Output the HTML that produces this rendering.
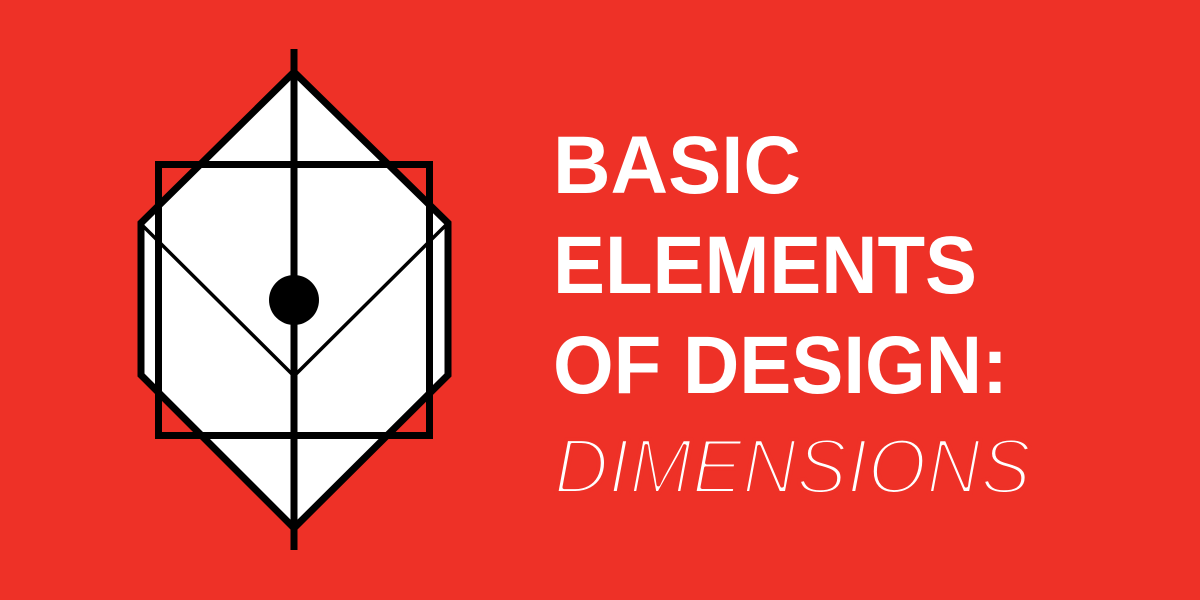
<!DOCTYPE html>
<html><head><meta charset="utf-8"><style>
html,body{margin:0;padding:0;background:#ee3127;}
svg{display:block}
</style></head><body>
<svg width="1200" height="600" viewBox="0 0 1200 600" xmlns="http://www.w3.org/2000/svg">
<rect width="1200" height="600" fill="#ee3127"/>
<polygon points="294,72 448,223 448,375 294,528 141,375 141,223" fill="#fff" stroke="#000" stroke-width="7" stroke-linejoin="miter"/>
<rect x="158.5" y="164.5" width="271" height="271" fill="none" stroke="#000" stroke-width="7"/>
<polyline points="142,225 294,376 446,225" fill="none" stroke="#000" stroke-width="3.5"/>
<line x1="294" y1="49" x2="294" y2="550" stroke="#000" stroke-width="7"/>
<circle cx="294" cy="300" r="25" fill="#000"/>
<g fill="#fff" font-family="'Liberation Sans', sans-serif">
<text x="553" y="193" font-size="82" font-weight="bold" textLength="248" lengthAdjust="spacingAndGlyphs">BASIC</text>
<text x="553" y="293" font-size="82" font-weight="bold" textLength="424" lengthAdjust="spacingAndGlyphs">ELEMENTS</text>
<text x="553" y="393" font-size="82" font-weight="bold" textLength="455" lengthAdjust="spacingAndGlyphs">OF DESIGN:</text>
<text x="554" y="493" font-size="78" font-style="italic" textLength="477" lengthAdjust="spacingAndGlyphs" stroke="#ee3127" stroke-width="4" stroke-linejoin="round">DIMENSIONS</text>
</g>
</svg>
</body></html>
